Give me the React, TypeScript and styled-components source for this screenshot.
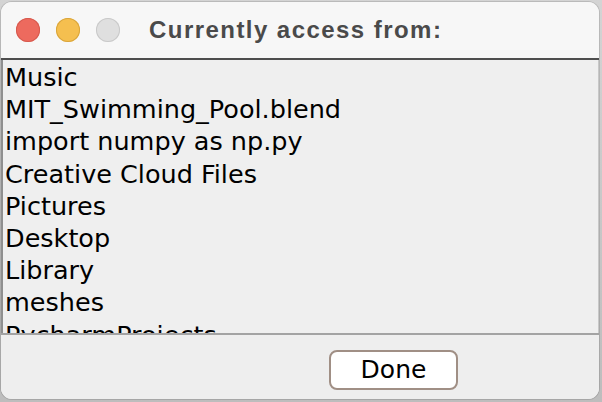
import styled, { createGlobalStyle } from "styled-components";

const GlobalStyle = createGlobalStyle`
    html, body {
        margin: 0;
        padding: 0;
        width: 602px;
        height: 402px;
        overflow: hidden;
        background: linear-gradient(180deg, #d4d4d4 0%, #bdbdbd 100%);
    }
`

const Window = styled.div`
    width: 598px;
    height: 397px;
    margin: 2px 0 0 1px;
    border-radius: 11px;
    background: #eeeeee;
    overflow: hidden;
    display: flex;
    flex-direction: column;
    box-shadow: 0 0 0 1px rgba(0, 0, 0, 0.12);
`

const TitleBar = styled.div`
    height: 56px;
    flex-shrink: 0;
    background: #f7f7f7;
    border-bottom: 2px solid #4e4e4e;
    display: flex;
    align-items: center;
    padding-left: 15px;
`

const Lights = styled.div`
    display: flex;
    gap: 16px;
    margin-right: 29px;
`

const Light = styled.span<{ $fill: string; $edge: string }>`
    width: 24px;
    height: 24px;
    border-radius: 50%;
    background: ${p => p.$fill};
    box-shadow: inset 0 0 0 1px ${p => p.$edge};
`

const Title = styled.div`
    font-family: "Liberation Sans", Arial, sans-serif;
    font-weight: 700;
    font-size: 24px;
    letter-spacing: 1.45px;
    color: #4a4a4a;
`

const List = styled.div`
    height: 272px;
    flex-shrink: 0;
    background: #efefef;
    border-left: 2px solid #8f8f8f;
    border-right: 1px solid #c8c8c8;
    overflow: hidden;
    padding: 1px 0 0 2px;
`

const Item = styled.div`
    font-family: "DejaVu Sans", "Lucida Grande", sans-serif;
    font-size: 25.5px;
    line-height: 32.2px;
    color: #000;
    white-space: nowrap;
`

const Footer = styled.div`
    flex: 1;
    border-top: 2px solid #a3a3a3;
    background: #eeeeee;
    display: flex;
    align-items: center;
    padding-left: 328px;
`

const DoneButton = styled.button`
    width: 129px;
    height: 40px;
    margin-top: 5px;
    background: #ffffff;
    border: 2px solid #a08f85;
    border-radius: 8px;
    font-family: "DejaVu Sans", "Lucida Grande", sans-serif;
    font-size: 25px;
    color: #000;
    padding: 0;
`

const items = [
    "Music",
    "MIT_Swimming_Pool.blend",
    "import numpy as np.py",
    "Creative Cloud Files",
    "Pictures",
    "Desktop",
    "Library",
    "meshes",
    "PycharmProjects",
]

export default function App() {
    return (
        <>
            <GlobalStyle />
            <Window>
                <TitleBar>
                    <Lights>
                        <Light $fill="#ed6a5e" $edge="#d65a4f" />
                        <Light $fill="#f5bf4f" $edge="#d9a53c" />
                        <Light $fill="#dfdfdf" $edge="#c9c9c9" />
                    </Lights>
                    <Title>Currently access from:</Title>
                </TitleBar>
                <List>
                    {items.map(name => <Item key={name}>{name}</Item>)}
                </List>
                <Footer>
                    <DoneButton>Done</DoneButton>
                </Footer>
            </Window>
        </>
    )
}
